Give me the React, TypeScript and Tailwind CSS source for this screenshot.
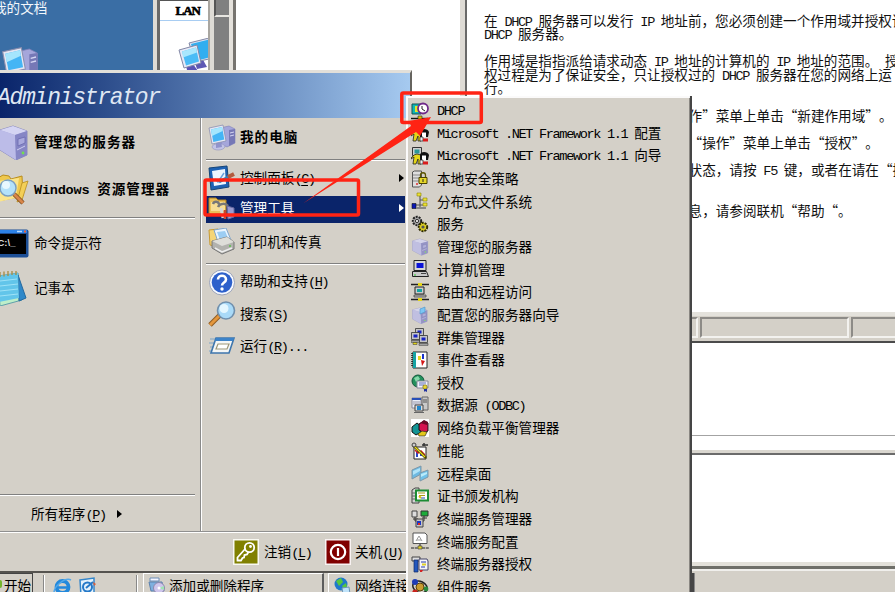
import React from "react";

const CJK = "font-['Noto_Sans_CJK_SC',sans-serif] [text-spacing-trim:space-all]";

// SimSun style metrics: full width glyphs take 1em, latin ones half of that
function Txt({ children, bold }: { children: string; bold?: boolean }) {
  const runs = children.split(/([\x20-\x7e]+)/).filter(Boolean);
  return (
    <span
      className={
        bold
          ? "text-[13.6px] font-bold tracking-[1px] whitespace-pre"
          : "text-[13.6px] whitespace-pre"
      }
    >
      {runs.map((run, i) =>
        /^[\x20-\x7e]/.test(run) ? (
          <span
            key={i}
            className={
              bold
                ? "font-['Liberation_Mono',monospace] tracking-[-0.26px]"
                : "font-['Liberation_Mono',monospace] tracking-[-1.36px]"
            }
          >
            {run}
          </span>
        ) : (
          <span key={i}>{run}</span>
        )
      )}
    </span>
  );
}

function Accel({ k }: { k: string }) {
  return (
    <span className="font-['Liberation_Mono',monospace] text-[13.6px] tracking-[-1.36px]">
      (<u className="underline-offset-2">{k}</u>)
    </span>
  );
}

function Rule({ className }: { className: string }) {
  return <div className={`h-[2px] shrink-0 border-t border-[#808080] bg-white ${className}`} />;
}

function Computer() {
  return (
    <>
      <path d="M13 5 L22 3 L28 6 V20 L20 24 L14 21Z" fill="#a5a6db" stroke="#7d7fb8" strokeWidth=".6" />
      <path d="M22 7 L28 6 V20 L22 23Z" fill="#7678b6" />
      <path d="M23 10 l4 -1 M23 13 l4 -1" stroke="#d5d6f2" />
      <path d="M5 24 C5 20 18 19 18 24 C16 28 6 28 5 24Z" fill="#c3c4e6" stroke="#8f91bd" strokeWidth=".6" />
      <path d="M9 19 L14 18 L15 24 L9 25Z" fill="#9193cb" />
      <path d="M2 5 L16 2 L19 18 L5 21Z" fill="#e4e6f3" stroke="#8c8fae" strokeWidth=".8" />
      <path d="M4 6.5 L15 4 L17.3 16.6 L6.3 19Z" fill="#45b5f5" />
      <path d="M4 6.5 L15 4 L15.7 8 L5 13Z" fill="#a5e6fd" />
    </>
  );
}

function Server() {
  return (
    <>
      <path d="M1 4 L14 0 L28 5 V29 L17 34 L1 24Z" fill="#a9a9dd" stroke="#7c7cb8" strokeWidth=".8" />
      <path d="M1 4 L14 0 L28 5 L16 9Z" fill="#d5d5f3" />
      <path d="M1 4 L16 9 L17 34 L1 24Z" fill="#bcbce8" />
      <path d="M16 9 L28 5 V29 L17 34Z" fill="#8686c5" />
      <path d="M19 13 L26 11 V17 L19 20Z" fill="#a9a9dd" stroke="#6a6aae" strokeWidth=".8" />
      <path d="M18 24 l8 -4" stroke="#cfcff0" />
      <circle cx="24" cy="27" r="1.4" fill="#72e04e" />
    </>
  );
}

// ---- small 18x18 icons of the admin tools menu ----

function MiniPc({ x, y, screen }: { x: number; y: number; screen: string }) {
  return (
    <g transform={`translate(${x} ${y})`}>
      <path d="M.5 .5h8v7h-8z" fill="#c6c6c6" stroke="#333" strokeWidth=".8" />
      <path d="M2.500 2.500h4v3h-4z" fill={screen} />
      <path d="M0 8.500h9v1.800h-9z" fill="#b0b0b0" stroke="#333" strokeWidth=".6" />
    </g>
  );
}

const toolIcons: Record<string, React.ReactNode> = {
  dhcp: (
    <>
      <path d="M1 2h9v10h-9z" fill="#10b6b6" stroke="#155" />
      <path d="M4 4h4v6h-4z" fill="#e6e628" />
      <circle cx="12" cy="6.5" r="5" fill="#fff" stroke="#702a8a" strokeWidth="1.8" />
      <path d="M11 4v3l3 2" fill="none" stroke="#222" />
      <path d="M0 16.5h17" stroke="#111" strokeWidth="1.4" />
      <path d="M7 14h4v3h-4z" fill="#e0c000" stroke="#222" strokeWidth=".6" />
    </>
  ),
  net: (
    <>
      <path d="M1.5 .5h9v8h-9z" fill="#cfcfcf" stroke="#333" />
      <path d="M3.500 2.500h5v4h-5z" fill="#2b9797" />
      <path d="M0 11l3-3 3-1 4 1v9h-3v-5l-2 5h-3l1-7-3 2z" fill="#e5d617" stroke="#222" strokeWidth=".8" />
      <path d="M9 8c0-4 8-4 9 0l-1 5h-8z" fill="#111" />
      <path d="M11 8.500h4v5h-4z" fill="#fff" />
      <path d="M9 13h3v4h-3z" fill="#eee" stroke="#222" strokeWidth=".7" />
      <path d="M12 14.500h5v3h-5z" fill="#d91c1c" />
    </>
  ),
  policy: (
    <>
      <path d="M1.5 2l2-1h7v14l-2 2h-7z" fill="#dedede" stroke="#555" />
      <path d="M2 5h7M2 8h7M2 11h7" stroke="#888" />
      <path d="M9.5 8v-3c0-3 5-3 5 0v3" fill="none" stroke="#5c5500" strokeWidth="1.3" />
      <path d="M8 7.500h8v6h-8z" fill="#e6d728" stroke="#4a4300" />
      <path d="M12 9v3" stroke="#222" />
      <circle cx="6" cy="14" r="1" fill="#d33" />
    </>
  ),
  dfs: (
    <>
      <path d="M9 4v11M9 8h4M9 13h4M5 13h5" stroke="#555" strokeWidth="1.1" fill="none" />
      <path d="M6 1h4v3h-4zM12 6h4v3h-4zM12 11h4v3h-4z" fill="#ece136" stroke="#8c8300" strokeWidth=".6" />
      <path d="M1 11.500h4v5h-4z" fill="#0a18b4" stroke="#111" strokeWidth=".6" />
      <path d="M5 15h10v2h-10z" fill="#888" />
    </>
  ),
  services: (
    <>
      <circle cx="6" cy="6" r="4.200" fill="#a7a7a7" stroke="#222" strokeWidth="2" strokeDasharray="2 1" />
      <circle cx="6" cy="6" r="1.600" fill="#eee" stroke="#333" />
      <circle cx="12" cy="12" r="4.200" fill="#d8cb21" stroke="#2d2a00" strokeWidth="2" strokeDasharray="2 1" />
      <circle cx="12" cy="12" r="1.600" fill="#555" />
    </>
  ),
  server: (
    <g transform="translate(1 1) scale(.56 .48)" opacity=".8">
      <Server />
    </g>
  ),
  computer: (
    <>
      <path d="M3 .5h12v10h-12z" fill="#d6d6d6" stroke="#222" />
      <path d="M5.500 3h7v5h-7z" fill="#0a12d8" />
      <path d="M1.5 11.500h14l2 5h-16z" fill="#c9c9c9" stroke="#222" />
      <path d="M10 13.500h5" stroke="#444" />
      <path d="M3 15h2" stroke="#2fc42f" />
    </>
  ),
  routing: (
    <>
      <path d="M0 1.5h18M0 16.5h18" stroke="#222" strokeWidth="1.6" />
      <path d="M7 0h4v3h-4zM7 15h4v3h-4z" fill="#e5d617" />
      <path d="M4 4h9v7h-9z" fill="#ccc" stroke="#222" />
      <path d="M6 6h5v3h-5z" fill="#13a5a5" />
      <path d="M3 12h12v2h-12z" fill="#b8b8b8" stroke="#333" strokeWidth=".7" />
    </>
  ),
  wizard: (
    <>
      <g transform="translate(1 2) scale(.54 .46)" opacity=".8">
        <Server />
      </g>
      <path d="M9 3l5-2v5l-5 2z" fill="#7cc6f4" stroke="#4c92c8" strokeWidth=".6" />
    </>
  ),
  cluster: (
    <>
      <MiniPc x={4} y={0} screen="#1722c4" />
      <MiniPc x={0} y={4} screen="#1722c4" />
      <MiniPc x={8} y={7} screen="#1722c4" />
      <path d="M2 14.500h4v2h-4z" fill="#e5d617" stroke="#333" strokeWidth=".5" />
    </>
  ),
  events: (
    <>
      <path d="M2 1h14v16h-14z" fill="#fff" stroke="#222" />
      <path d="M2 1h3v16h-3z" fill="#17a2a2" />
      <path d="M1 2v14" stroke="#111" strokeWidth="1.4" strokeDasharray="1 1" />
      <path d="M7 5h3v4h-3z" fill="#e8d51c" />
      <path d="M11 3h2v5h-2z" fill="#1c34c8" />
      <path d="M10 9l4 1-3 5z" fill="#d31616" />
    </>
  ),
  license: (
    <>
      <circle cx="7" cy="7" r="6" fill="#24905c" stroke="#11563a" />
      <path d="M3 4l4-2 2 3-4 3z" fill="#86d8aa" />
      <path d="M6 7h11v7h-11z" fill="#f2f2fa" stroke="#889" />
      <path d="M8 9h7M8 11h5" stroke="#6370b8" />
      <circle cx="14" cy="13" r="2.2" fill="#e7d536" stroke="#665b00" strokeWidth=".6" />
      <path d="M13 15v3l1-1 2 1v-3" fill="#2233a0" />
    </>
  ),
  odbc: (
    <>
      <path d="M1 2h9v10h-9z" fill="#e9eef8" stroke="#889" />
      <path d="M1 2h9v2h-9z" fill="#2950b8" />
      <path d="M2 6h7M2 8h7" stroke="#99a" />
      <path d="M11 1h6v13h-6z" fill="#c9c9c9" stroke="#666" />
      <path d="M12 4h4M12 6h4" stroke="#555" />
      <path d="M4 9h8v6h-8z" fill="#ddd" stroke="#444" />
      <path d="M6 10h4v4h-4z" fill="#2388cc" />
      <path d="M3 16.5h10" stroke="#666" />
    </>
  ),
  nlb: (
    <>
      <path d="M0 0h18v18h-18z" fill="#fff" />
      <path d="M1 8l5-4 4 3v6l-5 3-4-3z" fill="#139494" stroke="#111" />
      <path d="M8 5l5-3 4 2v8l-4 2-5-3z" fill="#d5134f" stroke="#111" />
      <path d="M9 4l4-3 4 2-1 3z" fill="#6d0b27" />
      <path d="M7 15l4-3 5 1-2 4h-6z" fill="#e3c71a" stroke="#332" strokeWidth=".7" />
    </>
  ),
  perf: (
    <>
      <path d="M3 5h12v12h-12z" fill="#fff" stroke="#222" />
      <path d="M5 15v-6h2v6zM9 14v-5h2v5z" fill="#2845c9" />
      <path d="M4 8l3 3 3-2 4 4" fill="none" stroke="#d32020" strokeWidth="1.5" />
      <path d="M2 3l13 13" stroke="#4b4700" strokeWidth="2.6" />
      <path d="M3 4l11 11" stroke="#ead91b" strokeWidth="1.2" />
      <path d="M11 3h6M13 1v3" stroke="#333" strokeWidth="1.5" />
      <circle cx="3" cy="3" r="2" fill="#ccc" stroke="#444" />
    </>
  ),
  remote: (
    <>
      <path d="M1 6l9-4v8l-9 5z" fill="#6db9e2" stroke="#7d97a8" />
      <path d="M2 7l7-3v3l-7 4z" fill="#b0e3f8" />
      <path d="M9 9l8-3v7l-8 4z" fill="#70c2ea" stroke="#7d97a8" />
      <path d="M10 10l6-2v2l-6 3z" fill="#b9ebfb" />
    </>
  ),
  cert: (
    <>
      <path d="M1 3l3-2h4v15h-7z" fill="#d3d3d3" stroke="#444" />
      <path d="M1 6h5M1 9h5M1 12h5" stroke="#666" />
      <path d="M5 3.500h12v10h-12z" fill="#fff" stroke="#1d8c34" strokeWidth="2" />
      <path d="M7 6h7M8 8.5h6" stroke="#a89818" />
      <path d="M10 11h4" stroke="#2947b9" />
      <path d="M8 9l2 2" stroke="#d7c212" strokeWidth="2" />
    </>
  ),
  tsman: (
    <>
      <path d="M1 1h5v6h-5z" fill="#ddd" stroke="#444" />
      <path d="M10 1h7v5h-7z" fill="#1cab39" stroke="#333" />
      <path d="M2 9h5M11 8h5M4 7v4h4M13 6v5h-3" fill="none" stroke="#333" />
      <path d="M5 9h7v8h-7z" fill="#c5c5c5" stroke="#444" />
      <path d="M6 11h4v4h-4z" fill="#1d35c4" />
      <path d="M7 13h2v2h-2z" fill="#e2291c" />
    </>
  ),
  tsconf: (
    <>
      <path d="M2 1h12l2 2v8.500h-14z" fill="#fff" stroke="#555" />
      <path d="M5 9l3-5 3 5M6 8h4" fill="none" stroke="#999" />
      <path d="M9 12v3M0 16h18" stroke="#222" strokeDasharray="3 .7" />
      <path d="M7 14h4v3h-4z" fill="#ded12a" stroke="#333" strokeWidth=".6" />
    </>
  ),
  tslic: (
    <>
      <path d="M1 2h8v4h-8z" fill="#ddd" stroke="#444" />
      <path d="M3 5h4v12h-4z" fill="#2357bd" stroke="#122c66" strokeWidth=".7" />
      <path d="M8 4h8l1 2v9h-9z" fill="#f4f4fb" stroke="#446" />
      <path d="M10 7h5M10 12h4" stroke="#2438a8" />
      <path d="M11 8.500h4v2h-4z" fill="#dfcf27" />
      <path d="M9 15h3l-1 2h-2z" fill="#d42222" />
    </>
  ),
  com: (
    <>
      <ellipse cx="9" cy="9" rx="7.5" ry="5.5" fill="none" stroke="#222" strokeWidth="1.5" transform="rotate(25 9 9)" />
      <circle cx="9" cy="9" r="4" fill="#c99a2e" stroke="#5a4109" />
      <circle cx="4" cy="4" r="3" fill="#1e3bb4" />
      <circle cx="15" cy="11" r="2.4" fill="#2a8a3c" />
      <circle cx="4" cy="14" r="2.6" fill="#c9231c" />
    </>
  ),
};

const tools = [
  ["dhcp", "DHCP"],
  ["net", "Microsoft .NET Framework 1.1 配置"],
  ["net", "Microsoft .NET Framework 1.1 向导"],
  ["policy", "本地安全策略"],
  ["dfs", "分布式文件系统"],
  ["services", "服务"],
  ["server", "管理您的服务器"],
  ["computer", "计算机管理"],
  ["routing", "路由和远程访问"],
  ["wizard", "配置您的服务器向导"],
  ["cluster", "群集管理器"],
  ["events", "事件查看器"],
  ["license", "授权"],
  ["odbc", "数据源 (ODBC)"],
  ["nlb", "网络负载平衡管理器"],
  ["perf", "性能"],
  ["remote", "远程桌面"],
  ["cert", "证书颁发机构"],
  ["tsman", "终端服务管理器"],
  ["tsconf", "终端服务配置"],
  ["tslic", "终端服务器授权"],
  ["com", "组件服务"],
];

function ToolsMenu() {
  return (
    <div className="absolute left-[406px] top-[96px] h-[500px] w-[286px] border-r-2 border-[#454545] bg-[#d4d0c8] shadow-[inset_-1px_0_0_#8a8782]">
      <div className="h-full border-l-2 border-t-2 border-white/90 pt-[1.5px]">
        {tools.map(([icon, label]) => (
          <div key={label} className="flex h-[22.67px] items-center">
            <svg className="ml-[3px] h-[18px] w-[18px] shrink-0" viewBox="0 0 18 18">
              {toolIcons[icon]}
            </svg>
            <span className="ml-2 pb-[3px] leading-none">
              <Txt>{label}</Txt>
            </span>
          </div>
        ))}
      </div>
    </div>
  );
}

function Desktop() {
  return (
    <div className="absolute left-0 top-0 flex h-[97px] w-[467px]">
      <div className="relative w-[153px] overflow-hidden bg-[#3a6ea5]">
        <div className="absolute left-[-7px] top-[-4px] leading-[20px] text-[#f3f7fb]">
          <Txt>我的文档</Txt>
        </div>
        <svg className="absolute left-0 top-[45px] h-[36px] w-[40px]" viewBox="0 0 30 27">
          <Computer />
        </svg>
      </div>
      <div className="w-[4px] bg-[#dedbd5]" />
      <div className="w-[3px] bg-[#696969]" />
      <div className="relative w-[48px] overflow-hidden border-t border-[#555] bg-white">
        <div className="flex h-[20px] items-center justify-end border-b border-[#a8cdf2] pr-[8px] font-['Liberation_Serif',serif] text-[13px] font-black leading-none tracking-[-1px] [-webkit-text-stroke:0.6px_black]">
          LAN
        </div>
        <svg className="absolute left-[18px] top-[37px] h-[38px] w-[36px]" viewBox="0 0 36 38">
          <path d="M16 22l8-2 5 9-10 2z" fill="#5e58b4" />
          <path d="M11 5l20-5v21l-14 3z" fill="#dfe3f4" stroke="#8388a6" />
          <path d="M13 6l20-5v18l-15 4z" fill="#31aef0" />
          <path d="M8 28l7-2 5 7-10 3z" fill="#5b54b6" />
          <path d="M1 12l18-5 4 18-17 5z" fill="#e6e9f7" stroke="#8388a6" />
          <path d="M4 13.500l14-4 3 14-13 4z" fill="#4bbcf6" />
          <path d="M4 13.500l14-4 1 5-14 5z" fill="#a9e7fd" />
        </svg>
      </div>
      <div className="w-[6px] border-l-2 border-[#a9a6a0] bg-[#dedbd5]" />
      <div className="w-[15px] bg-[#808080]">
        <div className="h-[17px] border-b-2 border-l-2 border-b-[#e8e6e1] border-l-[#555]" />
      </div>
      <div className="w-[4px] bg-[#e4e1db]" />
      <div className="w-[3px] bg-[#77746f]" />
      <div className="w-[224px] bg-white" />
      <div className="w-[5px] bg-[#dedbd5]" />
      <div className="w-[2px] bg-[#696969]" />
    </div>
  );
}

const helpLines = [
  "在 DHCP 服务器可以发行 IP 地址前，您必须创建一个作用域并授权该",
  "DHCP 服务器。",
  "",
  "作用域是指指派给请求动态 IP 地址的计算机的 IP 地址的范围。 授",
  "权过程是为了保证安全，只让授权过的 DHCP 服务器在您的网络上运",
  "行。",
];

const helpTail = [
  "作”菜单上单击“新建作用域”。",
  "",
  "“操作”菜单上单击“授权”。",
  "",
  "状态，请按 F5 键，或者在请在“操",
  "",
  "",
  "息，请参阅联机“帮助“。",
];

function Console() {
  return (
    <div className="absolute left-[460px] top-0 flex h-[592px] w-[435px] flex-col overflow-hidden bg-white">
      <div className="h-[312px] shrink-0 overflow-hidden border-l-[5px] border-[#d4d0c8] pl-[1px] shadow-[inset_1px_0_0_#777]">
        <div className="pl-[18px] pt-[12.5px] text-[#111]">
          {helpLines.map((line, i) => (
            <div key={i} className="h-[13.6px] leading-[13.6px]">
              <Txt>{line}</Txt>
            </div>
          ))}
        </div>
        <div className="pl-[222.600px] pt-[13.6px] text-[#111]">
          {helpTail.map((line, i) => (
            <div key={i} className="h-[13.6px] leading-[13.6px]">
              <Txt>{line}</Txt>
            </div>
          ))}
        </div>
      </div>
      {/* status bar */}
      <div className="flex h-[31px] shrink-0 gap-[2px] border-b-2 border-t-4 border-b-[#4b4b4b] border-t-[#e4e2dc] bg-[#d4d0c8] pb-[3px] pt-[1px]">
        <div className="w-[238px] border-b-2 border-r-2 border-t-2 border-b-[#f3f2ef] border-r-[#f3f2ef] border-t-[#8d8b87]" />
        <div className="w-[149px] border-2 border-b-[#f3f2ef] border-l-[#8d8b87] border-r-[#f3f2ef] border-t-[#8d8b87]" />
        <div className="flex-1 border-b-2 border-l-2 border-t-2 border-b-[#f3f2ef] border-l-[#8d8b87] border-t-[#8d8b87]" />
      </div>
      <div className="h-[92px] shrink-0" />
      <div className="h-px shrink-0 bg-[#a3a3a3]" />
      <div className="h-[14px] shrink-0" />
      <div className="h-[5px] shrink-0 border-b-2 border-[#6b6b6b] bg-[#dad7d0]" />
      <div className="h-[107px] shrink-0" />
      <div className="h-[4px] shrink-0 bg-[#e3e1da]" />
      <div className="h-[3px] shrink-0 bg-[#6f6f69]" />
      <div className="h-[2px] shrink-0 bg-[#f0efec]" />
      <div className="flex-1 bg-[#d4d0c8] pl-[232px] pt-[2px]">
        <div className="h-full w-[3px] border-r border-[#888] bg-[#454545]" />
      </div>
    </div>
  );
}

function RightItem({
  icon,
  label,
  accel,
  bold,
  dots,
  arrow,
  className,
}: {
  icon: React.ReactNode;
  label: string;
  accel?: string;
  bold?: boolean;
  dots?: boolean;
  arrow?: boolean;
  className: string;
}) {
  return (
    <div className={`flex shrink-0 items-center ${className}`}>
      <svg className="ml-[2px] h-[28px] w-[28px] shrink-0" viewBox="0 0 28 28">
        {icon}
      </svg>
      <span className="ml-1 whitespace-nowrap pb-[4px] leading-none">
        <Txt bold={bold}>{label}</Txt>
        {accel && <Accel k={accel} />}
        {dots && <Txt>...</Txt>}
      </span>
      {arrow && (
        <svg className="mb-[2px] ml-auto mr-[1px] h-2 w-[5px]" viewBox="0 0 5 8">
          <path d="M0 0L5 4L0 8Z" fill="currentColor" />
        </svg>
      )}
    </div>
  );
}

function LeftItem({
  icon,
  label,
  bold,
  className,
}: {
  icon: React.ReactNode;
  label: string;
  bold?: boolean;
  className: string;
}) {
  return (
    <div className={`flex shrink-0 items-center ${className}`}>
      <svg className="h-[35px] w-[30px] shrink-0" viewBox="0 0 30 35">
        {icon}
      </svg>
      <span className="ml-1 whitespace-nowrap pb-[3px] leading-none">
        <Txt bold={bold}>{label}</Txt>
      </span>
    </div>
  );
}

function StartMenu() {
  return (
    <div className="absolute left-0 top-[70px] flex h-[503px] w-[412px] flex-col border-b-2 border-r-2 border-t-[3px] border-b-[#55534f] border-r-[#66645f] border-t-[#e2dfd9] bg-[#d4d0c8]">
      <div className="flex h-[45px] shrink-0 items-center overflow-hidden bg-linear-to-r from-[#0a246a] to-[#a6caf0]">
        <span className="ml-[-3px] pt-[5px] font-['Liberation_Mono',monospace] text-[23px] italic leading-none tracking-[-1.27px] text-[#dfe7f3]">
          Administrator
        </span>
      </div>
      <div className="flex h-[414px] shrink-0 border-b border-[#909090]">
        <div className="flex w-[200px] flex-col">
          <LeftItem
            className="h-[48px]"
            bold
            label="管理您的服务器"
            icon={
              <g transform="translate(-1 1)">
                <Server />
              </g>
            }
          />
          <LeftItem
            className="h-[47px]"
            bold
            label="Windows 资源管理器"
            icon={
              <>
                <path d="M-2 6l5-3 6 1 2 3 11-3 1 20-25 5z" fill="#efc84d" stroke="#b98d1e" />
                <path d="M-2 9l21-3-3 20-18 4z" fill="#fbe58b" />
                <path d="M22 11l6-2-6 19-5 2z" fill="#f3cf57" stroke="#b98d1e" strokeWidth=".8" />
                <path d="M14 22l9 9" stroke="#7c4a1c" strokeWidth="4.500" />
                <path d="M14 22l9 9" stroke="#d88649" strokeWidth="3" />
                <circle cx="8" cy="16" r="8" fill="#b4e2fa" stroke="#7b9fc0" strokeWidth="1.500" />
                <circle cx="6" cy="13" r="4" fill="#e8f8ff" />
              </>
            }
          />
          <Rule className="mr-[5px] mt-[4px]" />
          <LeftItem
            className="h-[48px]"
            label="命令提示符"
            icon={
              <>
                <rect x="-4" y="3.500" width="32.500" height="28" rx="2" fill="#1d4f96" />
                <path d="M-3 4h30v3h-30z" fill="#2c82e8" />
                <path d="M17 5.500h5" stroke="#b9dcff" strokeWidth="1.500" />
                <path d="M24 5.500h2" stroke="#e5623d" strokeWidth="2" />
                <path d="M-3 8h29v20h-29z" fill="#000" />
                <text x="-2.500" y="20" fontSize="9.500" fontWeight="bold" fontFamily="Liberation Sans" fill="#ddd">
                  C:\_
                </text>
              </>
            }
          />
          <LeftItem
            className="h-[42px]"
            label="记事本"
            icon={
              <>
                <path d="M-2 5l20-3 4 27-22 6z" fill="#bdeec9" stroke="#5f9faa" />
                <path d="M18 4l8 23-7 3z" fill="#2f88c9" stroke="#24699f" />
                <path d="M-2 5l20-3 1 25-20 4z" fill="#62c5ea" />
                <path d="M0 10l17-2M0 15l18-2M0 20l18-2M0 25l18-2" stroke="#9fe2f7" />
                <path d="M0 6v-5M4 5.500v-5M8 5v-5M12 4v-4M16 4v-4" stroke="#a78a42" strokeWidth="1.300" />
              </>
            }
          />
          <Rule className="mr-[5px] mt-auto" />
          <div className="flex h-[35px] shrink-0 items-center pl-[31px] leading-none">
            <span className="pb-[1px]">
              <Txt>所有程序</Txt>
              <Accel k="P" />
            </span>
            <svg className="ml-[11px] h-2 w-[5px]" viewBox="0 0 5 8">
              <path d="M0 0L5 4L0 8Z" />
            </svg>
          </div>
        </div>
        <div className="w-[2px] border-l border-[#8a8a8a] bg-white" />
        <div className="flex w-[203px] flex-col pl-[4px]">
          <RightItem
            className="h-[38px]"
            bold
            label="我的电脑"
            icon={
              <g transform="translate(-1 0)">
                <Computer />
              </g>
            }
          />
          <Rule className="mb-[1px] mt-[3px]" />
          <RightItem
            className="h-[34px]"
            label="控制面板"
            accel="C"
            arrow
            icon={
              <>
                <path d="M1 3l18-2 2 21-18 3z" fill="#1e62b4" stroke="#164577" />
                <path d="M4 6l13-2 1 15-12 2z" fill="#edf6ff" />
                <path d="M7 14l3 3 6-9" fill="none" stroke="#6aa3dd" strokeWidth="1.500" />
                <path d="M11 17l11-6" stroke="#3b80ba" strokeWidth="3" />
                <path d="M20 12l6-3" stroke="#b25a3e" strokeWidth="4" />
              </>
            }
          />
          <RightItem
            className="h-[27px] bg-[#0a246a] pb-[2px] text-white"
            label="管理工具"
            arrow
            icon={
              <>
                <path d="M1 3h7l2 2h8v14h-17z" fill="#eac15a" stroke="#a97f22" />
                <path d="M3 7h14v9h-14z" fill="#f7de94" />
                <path d="M5 9c1-3 5-3 6 0M10 12c2-4 8-4 10-1" fill="none" stroke="#777" strokeWidth="2.500" />
                <path d="M19 11l7 2v9l-6 2z" fill="#9a9bd0" stroke="#6668a0" />
                <path d="M13 13l2 10" stroke="#d7d7d7" strokeWidth="3" />
                <path d="M17 15v9" stroke="#c34a33" strokeWidth="2.500" />
              </>
            }
          />
          <RightItem
            className="h-[38px]"
            label="打印机和传真"
            icon={
              <>
                <path d="M1 2l9-1v18l-8-2z" fill="#f5d577" stroke="#c79a33" />
                <path d="M6 2l12-2 5 12-13 2z" fill="#eaf5ff" stroke="#81a5c9" />
                <path d="M9 4l8-1 3 7-8 2z" fill="#9ccdf3" />
                <path d="M4 13l15-4 7 5v7l-12 5-10-6z" fill="#b2b2ae" stroke="#777" />
                <path d="M4 13l15-4 7 5-12 4z" fill="#deded9" />
                <path d="M7 20l7 4 10-4" fill="none" stroke="#eee" strokeWidth="1.500" />
                <circle cx="22" cy="18" r="1" fill="#58c048" />
              </>
            }
          />
          <Rule className="mb-[1px] mt-[2px]" />
          <RightItem
            className="h-[33px]"
            label="帮助和支持"
            accel="H"
            icon={
              <>
                <circle cx="14" cy="13.500" r="12.500" fill="#f7f9ff" stroke="#9ba3b8" />
                <circle cx="14" cy="13.500" r="10.300" fill="#2d60cb" />
                <path d="M10 10.500c0-5 8-5 8 0c0 3-4 3-4 6" fill="none" stroke="#fff" strokeWidth="2.600" />
                <circle cx="14" cy="20" r="1.700" fill="#fff" />
              </>
            }
          />
          <RightItem
            className="h-[32px]"
            label="搜索"
            accel="S"
            icon={
              <>
                <path d="M12 14L2 24" stroke="#8e5a21" strokeWidth="5" />
                <path d="M12 14L2 24" stroke="#e4973d" strokeWidth="3" />
                <circle cx="18" cy="9.500" r="8.500" fill="#a9daf8" stroke="#7190ad" strokeWidth="1.600" />
                <circle cx="16" cy="7.500" r="4.500" fill="#e4f7ff" />
              </>
            }
          />
          <RightItem
            className="h-[32px]"
            label="运行"
            accel="R"
            dots
            icon={
              <>
                <path d="M2 6h8M1 10h7M2 14h6M1 18h6" stroke="#7ea5c8" strokeWidth="1.200" />
                <path d="M8 5h18l-5 15h-18z" fill="#f4f6f6" stroke="#3e76ad" strokeWidth="1.600" />
                <path d="M8 5h18l-1 3h-18z" fill="#3c83c9" />
                <path d="M10 11h11l-2 5h-11z" fill="#fff" stroke="#9d9778" strokeWidth="1.200" />
              </>
            }
          />
        </div>
      </div>
      <div className="flex flex-1 items-center border-t border-white pl-[233px] leading-none">
        <svg className="h-[26px] w-[26px] shrink-0" viewBox="0 0 26 26">
          <path d="M0 0h26v26h-26z" fill="#f8f8f2" />
          <path d="M1.500 1.500h23v23h-23z" fill="#808000" />
          <circle cx="16.500" cy="8.500" r="4.700" fill="none" stroke="#fff" strokeWidth="1.800" />
          <circle cx="17.500" cy="7.500" r="1.400" fill="#fff" />
          <path d="M12.500 9.500L4.500 18.500V21.500H8L9.500 19L11 18.500L11.500 16L14 15.500L15.500 13" fill="none" stroke="#fff" strokeWidth="1.800" />
        </svg>
        <span className="ml-[5px] w-[61px] shrink-0 whitespace-nowrap pb-[1px]">
          <Txt>注销</Txt>
          <Accel k="L" />
        </span>
        <svg className="h-[26px] w-[26px] shrink-0" viewBox="0 0 26 26">
          <path d="M0 0h26v26h-26z" fill="#f8f2f2" />
          <path d="M1.500 1.500h23v23h-23z" fill="#800000" />
          <circle cx="13" cy="13" r="7.200" fill="none" stroke="#fff" strokeWidth="2.200" />
          <path d="M13 9v8" stroke="#fff" strokeWidth="2.200" />
        </svg>
        <span className="ml-[4px] whitespace-nowrap pb-[1px]">
          <Txt>关机</Txt>
          <Accel k="U" />
        </span>
      </div>
    </div>
  );
}

function Taskbar() {
  return (
    <div className="absolute left-0 top-[573px] flex h-[19px] w-[406px] overflow-hidden bg-[#d4d0c8]">
      <div className="flex w-[33px] shrink-0 border-r border-t border-[#444]">
        <div className="mt-[6px] h-[8px] w-[2px] rounded-r bg-[#74b62d]" />
        <span className="ml-[2px] whitespace-nowrap leading-[20px]">
          <Txt>开始</Txt>
        </span>
      </div>
      <div className="ml-[10px] mt-[2px] w-[2px] shrink-0 border-l border-[#888] bg-white" />
      <svg className="ml-[8px] mt-[4px] h-[20px] w-[20px] shrink-0" viewBox="0 0 20 20">
        <circle cx="9.500" cy="10" r="6" fill="none" stroke="#2389dc" strokeWidth="3.800" />
        <path d="M5 10.500h11" stroke="#2389dc" strokeWidth="2.500" />
        <path d="M1 16C1 9 12 0 18 3" fill="none" stroke="#52a8ea" strokeWidth="1.500" />
      </svg>
      <svg className="ml-[5px] mt-[4px] h-[20px] w-[20px] shrink-0" viewBox="0 0 20 20">
        <path d="M2 3l14-2v18h-13z" fill="#e5f2fc" stroke="#3486cb" strokeWidth="1.500" />
        <circle cx="9.500" cy="10" r="4.500" fill="none" stroke="#2478c8" strokeWidth="2" />
        <path d="M8 11l7-6" stroke="#2478c8" strokeWidth="2" />
        <path d="M15 5l3 2-2 2" fill="#dc5b37" />
      </svg>
      <div className="ml-[38px] mt-[2px] w-[2px] shrink-0 border-l border-[#888] bg-white" />
      <div className="ml-[5px] flex w-[181px] shrink-0 border-l border-r-2 border-t border-l-white border-r-[#5c5c5c] border-t-white">
        <svg className="ml-[4px] mt-[3px] h-[18px] w-[18px] shrink-0" viewBox="0 0 18 18">
          <path d="M2 1h9v3h-9z" fill="#f4f4ff" stroke="#6d8eb7" />
          <path d="M1 5h13l2 9h-13z" fill="#7eb0df" stroke="#5b80ad" />
          <circle cx="11" cy="11" r="5.500" fill="#cfc6ec" stroke="#8d88ad" />
          <path d="M11 11l5-2v4z" fill="#9fe4b4" />
          <circle cx="11" cy="11" r="1.500" fill="#fff" />
        </svg>
        <span className="ml-[3px] whitespace-nowrap leading-[20px]">
          <Txt>添加或删除程序</Txt>
        </span>
      </div>
      <div className="ml-[4px] flex w-[80px] shrink-0 overflow-hidden border-l border-t border-white">
        <svg className="ml-[4px] mt-[3px] h-[18px] w-[18px] shrink-0" viewBox="0 0 18 18">
          <circle cx="8" cy="7" r="6.500" fill="#1f78cc" />
          <path d="M3 4l5-3 2 4-4 4zM9 9l4-3 1 4-3 2z" fill="#56c73f" />
          <path d="M9 11l7-1 1 7h-7z" fill="#bfe3fa" stroke="#6c93b4" />
        </svg>
        <span className="ml-[4px] whitespace-nowrap leading-[20px]">
          <Txt>网络连接</Txt>
        </span>
      </div>
    </div>
  );
}

export default function App() {
  return (
    <div className={`relative h-[592px] w-[895px] overflow-hidden bg-[#d4d0c8] text-black ${CJK}`} lang="zh-CN">
      <Console />
      <Desktop />
      <Taskbar />
      <StartMenu />
      <ToolsMenu />
      {/* highlight marks */}
      <svg className="pointer-events-none absolute inset-0 h-full w-full" viewBox="0 0 895 592">
        <rect x="205" y="180" width="153.500" height="35" rx="1.500" fill="none" stroke="#ff2314" strokeWidth="3.500" />
        <rect x="401.800" y="93" width="79.500" height="29.500" rx="1.500" fill="none" stroke="#ff2314" strokeWidth="3.500" />
        <path d="M303 203.500L411 126L409 121L431 117L420 136L416 132Z" fill="#ff2314" />
      </svg>
    </div>
  );
}
